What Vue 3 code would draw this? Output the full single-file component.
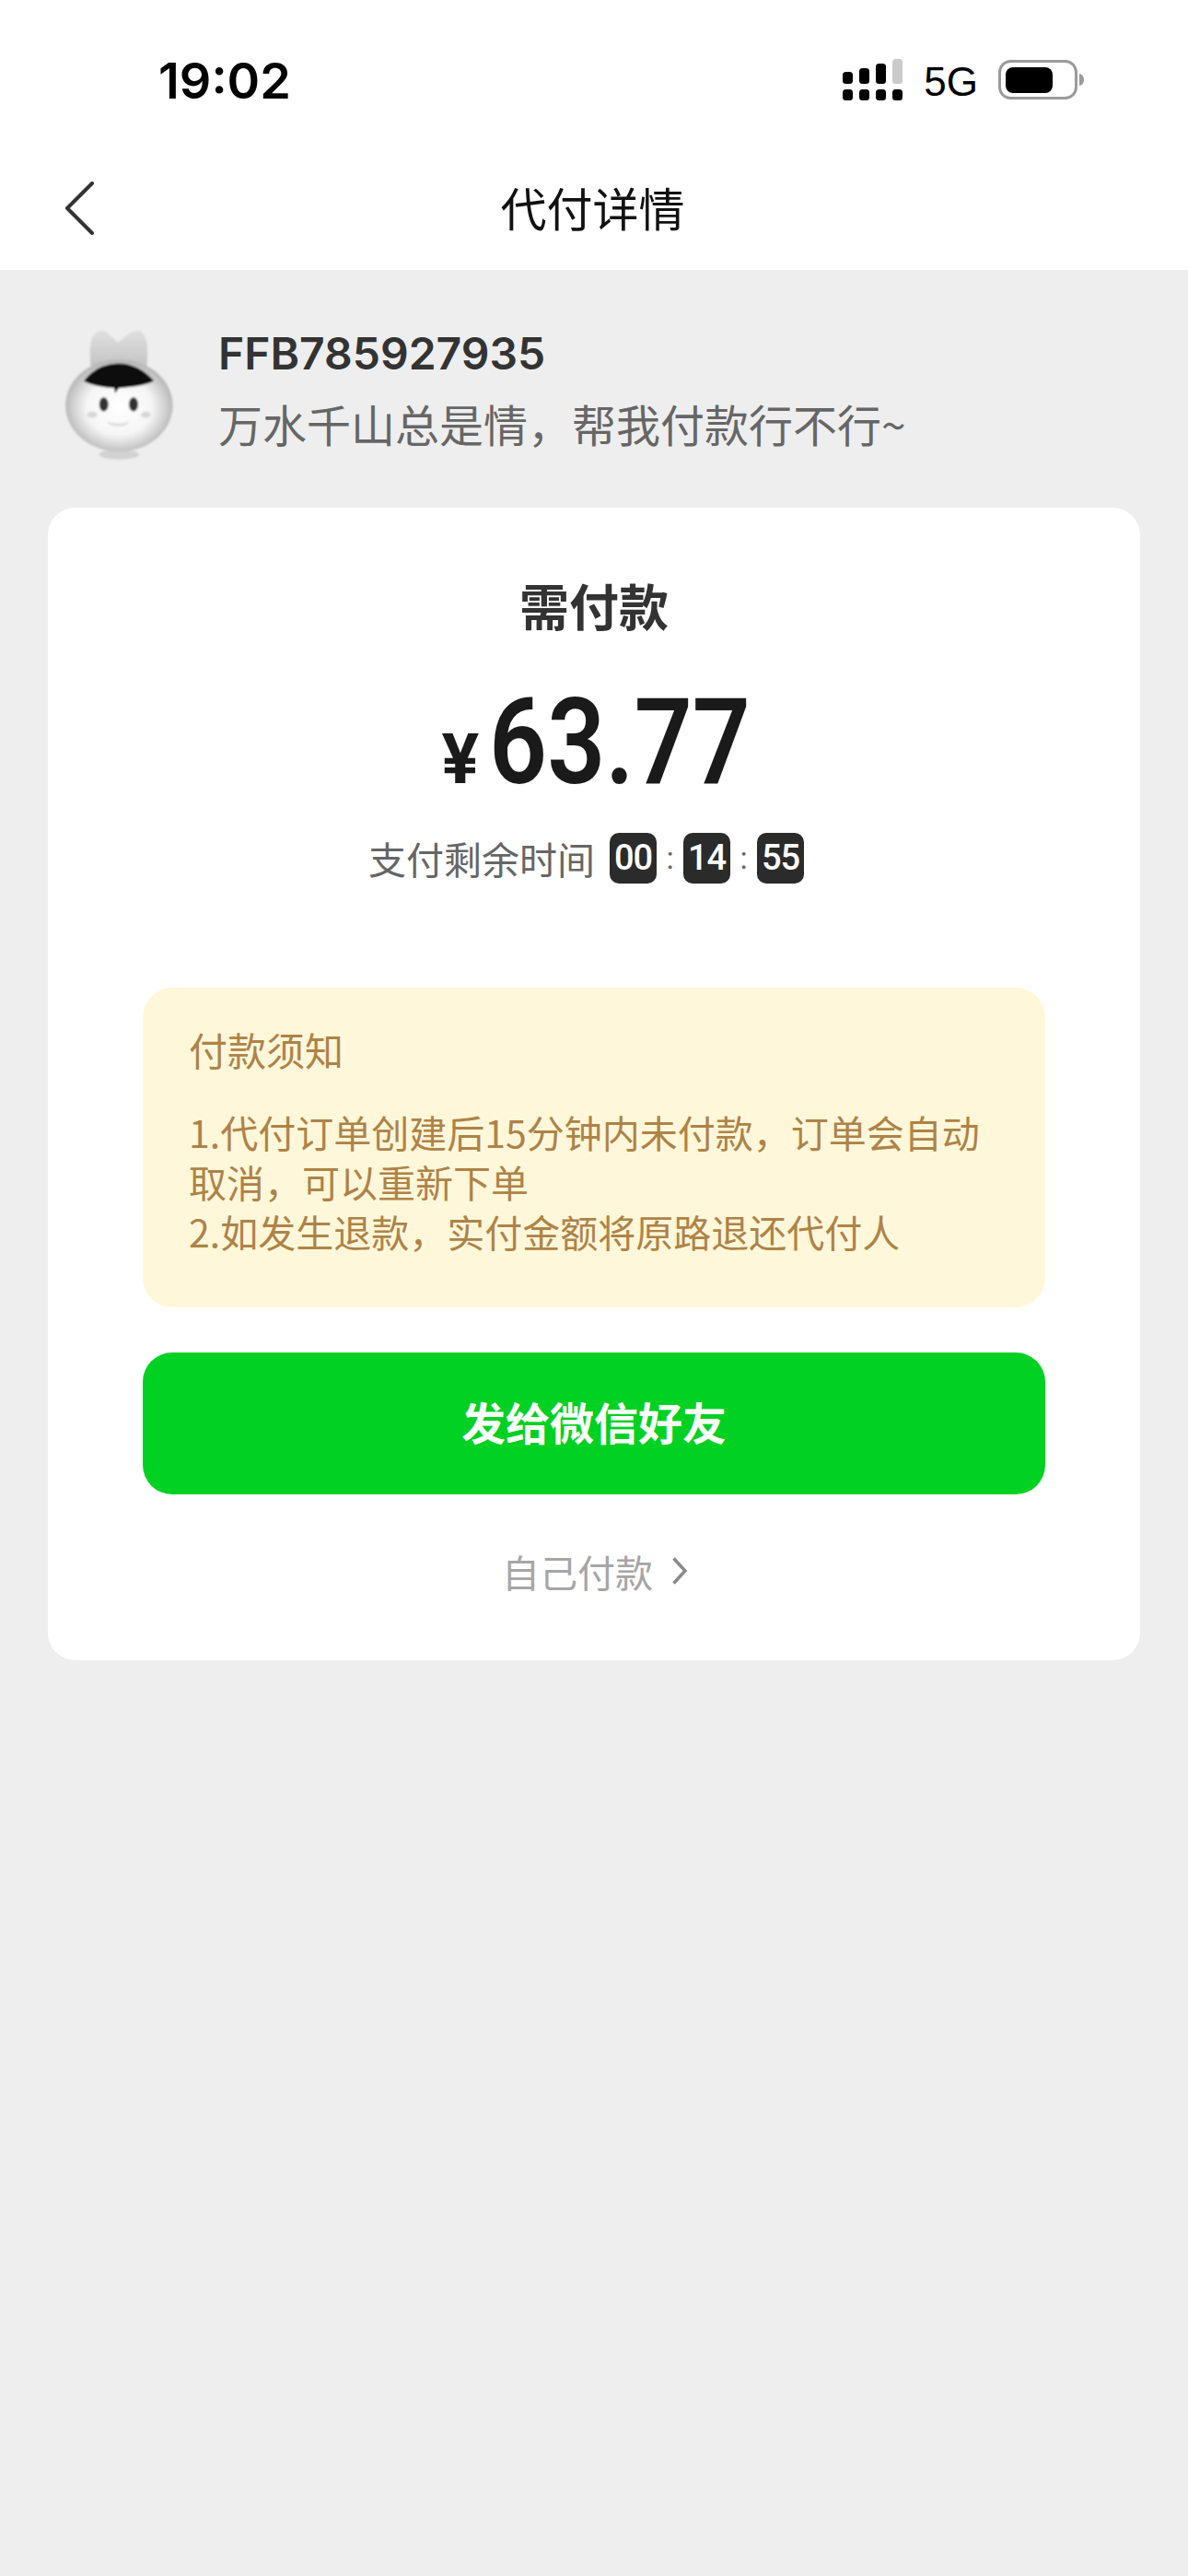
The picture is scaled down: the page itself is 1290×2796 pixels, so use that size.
<script setup>
const timer = ['00', '14', '55']
</script>

<template>
  <div class="page">
    <header class="top">
      <div class="status">
        <span class="time">19:02</span>
        <div class="status-right">
          <svg class="signal" width="66" height="46" viewBox="0 0 66 46">
            <rect x="0" y="14" width="11" height="13" rx="3.5" />
            <rect x="18" y="10" width="11" height="17" rx="3.5" />
            <rect x="36" y="5" width="11" height="22" rx="3.5" />
            <rect x="54" y="0" width="11" height="27" rx="3.5" fill="#cbcbcb" />
            <rect x="0" y="33" width="11" height="12" rx="3.5" />
            <rect x="18" y="33" width="11" height="12" rx="3.5" />
            <rect x="36" y="33" width="11" height="12" rx="3.5" />
            <rect x="54" y="33" width="11" height="12" rx="3.5" />
          </svg>
          <span class="net">5G</span>
          <svg class="battery" width="94" height="44" viewBox="0 0 94 44">
            <rect x="1.5" y="1.5" width="83" height="40" rx="12" fill="none" stroke="#9b9b9b" stroke-width="3" />
            <rect x="8" y="8" width="51" height="28" rx="8" fill="#000" />
            <path d="M88 15c3 .6 5 3 5 6.500s-2 6-5 6.500z" fill="#9b9b9b" />
          </svg>
        </div>
      </div>
      <div class="nav">
        <svg class="back" width="34" height="58" viewBox="0 0 34 58">
          <path d="M31 2 4 29 31 56" fill="none" stroke="#333" stroke-width="4" stroke-linecap="round" stroke-linejoin="round" />
        </svg>
        <span class="nav-title">代付详情</span>
      </div>
    </header>

    <main class="content">
      <div class="sender">
        <svg class="avatar" width="120" height="143" viewBox="90 80 360 430">
          <defs>
            <radialGradient id="headFill" cx="50%" cy="52%" r="52%">
              <stop offset="0%" stop-color="#fff" />
              <stop offset="58%" stop-color="#f6f6f6" />
              <stop offset="78%" stop-color="#d8d8d8" />
              <stop offset="100%" stop-color="#b4b4b4" />
            </radialGradient>
            <linearGradient id="earFill" x1="0" y1="0" x2="0" y2="1">
              <stop offset="0%" stop-color="#e0e0e0" />
              <stop offset="100%" stop-color="#c4c4c4" />
            </linearGradient>
            <filter id="soft"><feGaussianBlur stdDeviation="2.500" /></filter>
          </defs>
          <g filter="url(#soft)">
            <ellipse cx="268" cy="490" rx="66" ry="16" fill="#d2d2d2" />
            <path d="M175 200C170 130 175 90 210 85c20 0 40 30 55 40 20-15 35-40 65-40 30 7 35 55 28 115z" fill="url(#earFill)" />
            <ellipse cx="268" cy="330" rx="175" ry="150" fill="url(#headFill)" />
            <path d="M153 250c35-47 82-57 115-57 42 0 84 22 114 57-30 16-80 20-115 23l-12 17-3-17c-32-2-74-7-99-23z" fill="#111" />
            <ellipse cx="218" cy="326" rx="15" ry="23" fill="#333" />
            <ellipse cx="315" cy="326" rx="15" ry="23" fill="#333" />
            <ellipse cx="180" cy="360" rx="16" ry="10" fill="#d6d6d6" />
            <ellipse cx="355" cy="360" rx="16" ry="10" fill="#d6d6d6" />
            <path d="M228 382q37 13 74 0-7 16-37 16t-37-16z" fill="#dedede" />
          </g>
        </svg>
        <div class="sender-text">
          <div class="sender-name">FFB785927935</div>
          <div class="sender-msg">万水千山总是情，帮我付款行不行~</div>
        </div>
      </div>

      <section class="card">
        <h2 class="pay-label">需付款</h2>
        <div class="amount">
          <span class="yen">¥</span>
          <span class="value">63.77</span>
        </div>
        <div class="remain">
          <span class="remain-label">支付剩余时间</span>
          <template v-for="(part, i) in timer" :key="i">
            <span v-if="i" class="colon">:</span>
            <span class="digit">{{ part }}</span>
          </template>
        </div>

        <div class="notice">
          <div class="notice-title">付款须知</div>
          <p>1.代付订单创建后15分钟内未付款，订单会自动取消，可以重新下单<br />2.如发生退款，实付金额将原路退还代付人</p>
        </div>

        <button class="send-btn">发给微信好友</button>

        <div class="self-pay">
          <span>自己付款</span>
          <svg width="18" height="32" viewBox="0 0 18 32">
            <path d="M2.500 2.500 15 16 2.500 29.500" fill="none" stroke="#8a8a8a" stroke-width="3.500" />
          </svg>
        </div>
      </section>
    </main>
  </div>
</template>

<style>
body {
  margin: 0;
  background: #eeeeee;
}
</style>

<style scoped>
.page {
  width: 1290px;
  height: 2796px;
  background: #eeeeee;
  overflow: hidden;
  font-family: "Noto Sans CJK SC", "Liberation Sans", sans-serif;
}

.top {
  background: #fff;
  height: 293px;
}

.status {
  display: flex;
  justify-content: space-between;
  align-items: center;
  height: 176px;
  padding: 0 112px 0 172px;
  box-sizing: border-box;
}

.time {
  font-family: Inter, "Liberation Sans", sans-serif;
  font-size: 54px;
  font-weight: 600;
  color: #000;
  line-height: 1;
}

.status-right {
  display: flex;
  align-items: center;
  gap: 22px;
}

.signal,
.battery {
  margin-top: -2px;
}

.net {
  font-family: "Liberation Sans", sans-serif;
  font-size: 44px;
  color: #000;
  line-height: 1;
  margin-top: 2px;
}

.nav {
  position: relative;
  display: flex;
  justify-content: center;
  align-items: center;
  height: 104px;
  margin-top: -4px;
}

.back {
  position: absolute;
  left: 69px;
  top: 25px;
}

.nav-title {
  font-size: 50px;
  color: #111;
  line-height: 1;
  margin-left: -3px;
}

.content {
  padding: 0 52px;
}

.sender {
  display: flex;
  align-items: flex-start;
  gap: 47px;
  height: 258px;
  padding-left: 18px;
}

.avatar {
  margin-top: 64px;
}

.sender-text {
  padding-top: 61px;
}

.sender-name {
  font-family: Inter, "Liberation Sans", sans-serif;
  font-size: 48px;
  font-weight: 600;
  color: #333;
  line-height: 60px;
}

.sender-msg {
  margin-top: 7px;
  font-size: 48px;
  color: #666;
  line-height: 76px;
}

.card {
  background: #fff;
  border-radius: 30px;
  height: 1251px;
  padding: 70px 103px 0;
  box-sizing: border-box;
}

.pay-label {
  margin: 0;
  text-align: center;
  font-size: 54px;
  font-weight: 700;
  color: #333;
  line-height: 72px;
}

.amount {
  display: flex;
  justify-content: center;
  align-items: baseline;
  margin-top: 43px;
  padding-left: 5px;
  height: 140px;
  color: #1a1a1a;
  font-family: Roboto, "Liberation Sans", sans-serif;
  font-weight: 600;
}

.yen {
  font-size: 76px;
  font-weight: 700;
  line-height: 140px;
  margin-right: 11px;
}

/* no DIN here, so Roboto gets squeezed to the narrow digit width */
.value {
  display: inline-block;
  font-size: 130px;
  line-height: 140px;
  transform: scaleX(0.85);
  transform-origin: left center;
  margin-right: -50px;
}

.remain {
  display: flex;
  justify-content: center;
  align-items: center;
  margin-top: 27px;
  padding-right: 17px;
  height: 56px;
}

.remain-label {
  font-size: 41px;
  color: #666;
  margin-right: 16px;
}

.colon {
  width: 29px;
  text-align: center;
  font-family: Roboto, sans-serif;
  font-size: 34px;
  color: #666;
}

.digit {
  width: 51px;
  height: 55px;
  border-radius: 10px;
  background: #2b2b2b;
  color: #fff;
  font-family: Roboto, sans-serif;
  font-size: 38px;
  font-weight: 500;
  letter-spacing: -1px;
  line-height: 55px;
  text-align: center;
}

.notice {
  margin-top: 113px;
  height: 347px;
  padding: 40px 50px 0;
  box-sizing: border-box;
  border-radius: 32px;
  background: #fff7da;
  color: #ae8347;
  font-size: 41px;
  line-height: 54px;
}

.notice-title {
  font-size: 42px;
  margin-bottom: 35px;
}

.notice p {
  margin: 0;
}

.send-btn {
  display: block;
  width: 100%;
  height: 154px;
  margin-top: 49px;
  padding: 0 0 6px;
  border: 0;
  border-radius: 32px;
  background: #00d122;
  color: #fff;
  font-family: inherit;
  font-size: 48px;
  font-weight: 700;
}

.self-pay {
  display: flex;
  justify-content: center;
  align-items: center;
  gap: 20px;
  margin-top: 49px;
  padding-left: 2px;
  font-size: 41px;
  line-height: 68px;
  color: #a6a6a6;
}
</style>
